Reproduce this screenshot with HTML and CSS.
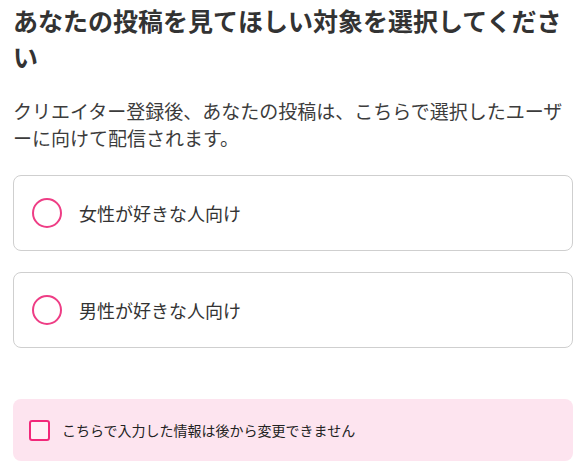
FILE: index.html
```html
<!DOCTYPE html>
<html lang="ja">
<head>
<meta charset="utf-8">
<link rel="stylesheet" href="styles.css">
</head>
<body>
<main class="page">
  <h1 class="title">あなたの投稿を見てほしい対象を選択してください</h1>
  <p class="lead">クリエイター登録後、あなたの投稿は、こちらで選択したユーザーに向けて配信されます。</p>
  <div class="options">
    <label class="option"><span class="radio"></span><span class="option-text">女性が好きな人向け</span></label>
    <label class="option"><span class="radio"></span><span class="option-text">男性が好きな人向け</span></label>
  </div>
  <label class="notice"><span class="check"></span><span class="notice-text">こちらで入力した情報は後から変更できません</span></label>
</main>
</body>
</html>
```

FILE: styles.css
```css
html, body {
  margin: 0;
  padding: 0;
  background: #fff;
}
body {
  font-family: "Noto Sans CJK JP", "Noto Sans", sans-serif;
  color: #333;
}
.page {
  padding: 2px 14px 0 13px;
}
.title {
  margin: 0;
  font-size: 25px;
  line-height: 36px;
  font-weight: 700;
  color: #333;
}
.lead {
  margin: 23px 0 0;
  font-size: 19px;
  line-height: 27px;
  color: #3c3c3c;
}
.options {
  margin-top: 24px;
  display: flex;
  flex-direction: column;
  gap: 21px;
}
.option {
  display: flex;
  align-items: center;
  height: 74px;
  border: 1px solid #cfcfcf;
  border-radius: 8px;
  padding-left: 18px;
}
.radio {
  width: 26px;
  height: 26px;
  border: 2px solid #ee3d85;
  border-radius: 50%;
  flex: none;
}
.option-text {
  margin-left: 17px;
  font-size: 18px;
  color: #333;
}
.notice {
  margin-top: 51px;
  display: flex;
  align-items: center;
  height: 62px;
  background: #fde4ef;
  border-radius: 8px;
  padding-left: 16px;
}
.check {
  width: 17px;
  height: 17px;
  border: 2.5px solid #f2287a;
  border-radius: 3px;
  background: #fff0f6;
  flex: none;
}
.notice-text {
  margin-left: 12px;
  font-size: 14px;
  color: #222;
}
```
